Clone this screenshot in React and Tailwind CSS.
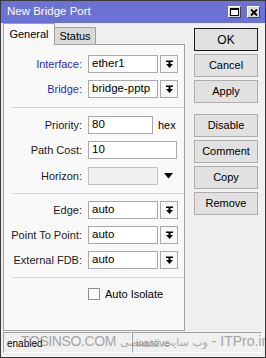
import React from 'react'

const font = { fontFamily: '"Liberation Sans", Arial, sans-serif' }

function DropIcon() {
    return (
        <svg width="9" height="9" viewBox="0 0 9 9">
            <rect x="1" y="0.5" width="7" height="1.5" fill="#000" />
            <rect x="3.5" y="2" width="2" height="2" fill="#000" />
            <path d="M1 4 H8 L4.5 8 Z" fill="#000" />
        </svg>
    )
}

function Select({ value }) {
    return (
        <div className="flex items-center">
            <div className="w-[70px] h-[18px] bg-white border border-[#a9a9a9] flex items-center pl-[3px] text-[11.5px] text-black">
                {value}
            </div>
            <div className="ml-[2px] w-[18px] h-[18px] bg-[#f7f7f7] border border-[#a9a9a9] flex items-center justify-center">
                <DropIcon />
            </div>
        </div>
    )
}

function Row({ label, blue, children, className = '' }) {
    return (
        <div className={`flex items-center h-[18px] ${className}`}>
            <div className={`w-[78px] text-right text-[11px] whitespace-nowrap ${blue ? 'text-[#2a2ac8]' : 'text-[#1a1a1a]'}`}>
                {label}
            </div>
            <div className="ml-[6px]">{children}</div>
        </div>
    )
}

function Sep({ className = '' }) {
    return <div className={`ml-[8px] border-t border-[#d6d6d6] ${className}`} />
}

function Btn({ children, primary, className = '' }) {
    return (
        <div className={`h-[23px] flex items-center justify-center text-[11px] text-black bg-[#e1e1e1] border ${primary ? 'border-[#1a1a1a] text-[12px]' : 'border-[#adadad]'} ${className}`}>
            {children}
        </div>
    )
}

export default function App() {
    return (
        <div style={font} className="relative w-[266px] h-[358px] bg-[#f0f0f0] border border-[#3a3a3a] flex flex-col overflow-hidden">

            {/* title bar */}
            <div className="h-[22px] bg-[#6b72d3] flex items-center pl-[6px] pr-[5px]">
                <span className="text-white text-[11.5px]">New Bridge Port</span>
                <div className="ml-auto flex gap-[6px]">
                    <div className="w-[13px] h-[12px] bg-[#dcdcdc] border border-t-white border-l-white border-b-[#444] border-r-[#444] flex items-center justify-center">
                        <div className="w-[9px] h-[8px] border border-black border-t-2 bg-white" />
                    </div>
                    <div className="w-[13px] h-[12px] bg-[#dcdcdc] border border-t-white border-l-white border-b-[#444] border-r-[#444] flex items-center justify-center">
                        <svg width="8" height="7" viewBox="0 0 8 7">
                            <path d="M1 0.5 L7 6.5 M7 0.5 L1 6.5" stroke="#000" strokeWidth="1.8" />
                        </svg>
                    </div>
                </div>
            </div>

            <div className="flex pl-[2px]">
                {/* left: tabs + panel */}
                <div className="w-[182px] flex flex-col">
                    <div className="flex items-end h-[21px]">
                        <div className="relative z-10 w-[52px] h-[22px] -mb-[1px] bg-[#f9f9f9] border border-b-0 border-[#a0a0a0] flex items-center justify-center text-[11px] text-black">
                            General
                        </div>
                        <div className="w-[41px] h-[17px] bg-[#d9d9d9] border border-b-0 border-l-0 border-[#a0a0a0] flex items-center justify-center text-[11px] text-black">
                            Status
                        </div>
                    </div>
                    <div className="h-[287px] bg-[#f9f9f9] border border-[#a0a0a0] pt-[10px]">
                        <Row label="Interface:" blue><Select value="ether1" /></Row>
                        <Row label="Bridge:" blue className="mt-[7px]"><Select value="bridge-pptp" /></Row>
                        <Sep className="mt-[9px]" />
                        <Row label="Priority:" className="mt-[8px]">
                            <div className="flex items-center">
                                <div className="w-[65px] h-[18px] bg-white border border-[#a9a9a9] flex items-center pl-[3px] text-[11.5px]">80</div>
                                <span className="ml-[5px] text-[11px]">hex</span>
                            </div>
                        </Row>
                        <Row label="Path Cost:" className="mt-[7px]">
                            <div className="w-[89px] h-[18px] bg-white border border-[#a9a9a9] flex items-center pl-[3px] text-[11.5px]">10</div>
                        </Row>
                        <Row label="Horizon:" className="mt-[8px]">
                            <div className="flex items-center">
                                <div className="w-[70px] h-[18px] bg-[#f0f0f0] border border-[#c4c4c4]" />
                                <svg className="ml-[6px]" width="9" height="6" viewBox="0 0 9 6">
                                    <path d="M0 0 H9 L4.5 5.5 Z" fill="#000" />
                                </svg>
                            </div>
                        </Row>
                        <Sep className="mt-[8px]" />
                        <Row label="Edge:" className="mt-[7px]"><Select value="auto" /></Row>
                        <Row label="Point To Point:" className="mt-[7px]"><Select value="auto" /></Row>
                        <Row label="External FDB:" className="mt-[7px]"><Select value="auto" /></Row>
                        <Sep className="mt-[8px]" />
                        <div className="flex items-center mt-[8px] ml-[84px]">
                            <div className="w-[12px] h-[12px] bg-white border border-[#8f8f8f]" />
                            <span className="ml-[5px] text-[11px] text-black">Auto Isolate</span>
                        </div>
                    </div>
                </div>

                {/* right: buttons */}
                <div className="ml-[9px] w-[64px] pt-[5px] flex flex-col gap-[3px]">
                    <Btn primary>OK</Btn>
                    <Btn>Cancel</Btn>
                    <Btn>Apply</Btn>
                    <Btn className="mt-[8px]">Disable</Btn>
                    <Btn>Comment</Btn>
                    <Btn>Copy</Btn>
                    <Btn>Remove</Btn>
                </div>
            </div>

            {/* status bar */}
            <div className="mt-[1px] flex px-[2px] h-[21px]">
                <div className="w-[129px] border border-t-[#a0a0a0] border-l-[#a0a0a0] border-b-white border-r-white flex items-end pl-[3px] pb-[1px] text-[10px] text-black">
                    enabled
                </div>
                <div className="w-[130px] border border-t-[#a0a0a0] border-l-[#a0a0a0] border-b-white border-r-white flex items-end pl-[3px] pb-[1px] text-[10px] text-[#9a9a9a]">
                    inactive
                </div>
            </div>

            {/* watermark */}
            <div className="absolute left-[20px] top-[328px] whitespace-nowrap text-[#8c8c8c] opacity-75">
                <span className="text-[14px] tracking-[-0.4px]">TOSINSO.COM</span>{' '}
                <span className="text-[11px]" dir="rtl" style={{ fontFamily: '"DejaVu Sans", "Noto Sans", sans-serif' }}>وب سایت تخصصی</span>
                <span className="text-[14px]"> - ITPro.ir</span>
            </div>
        </div>
    )
}
